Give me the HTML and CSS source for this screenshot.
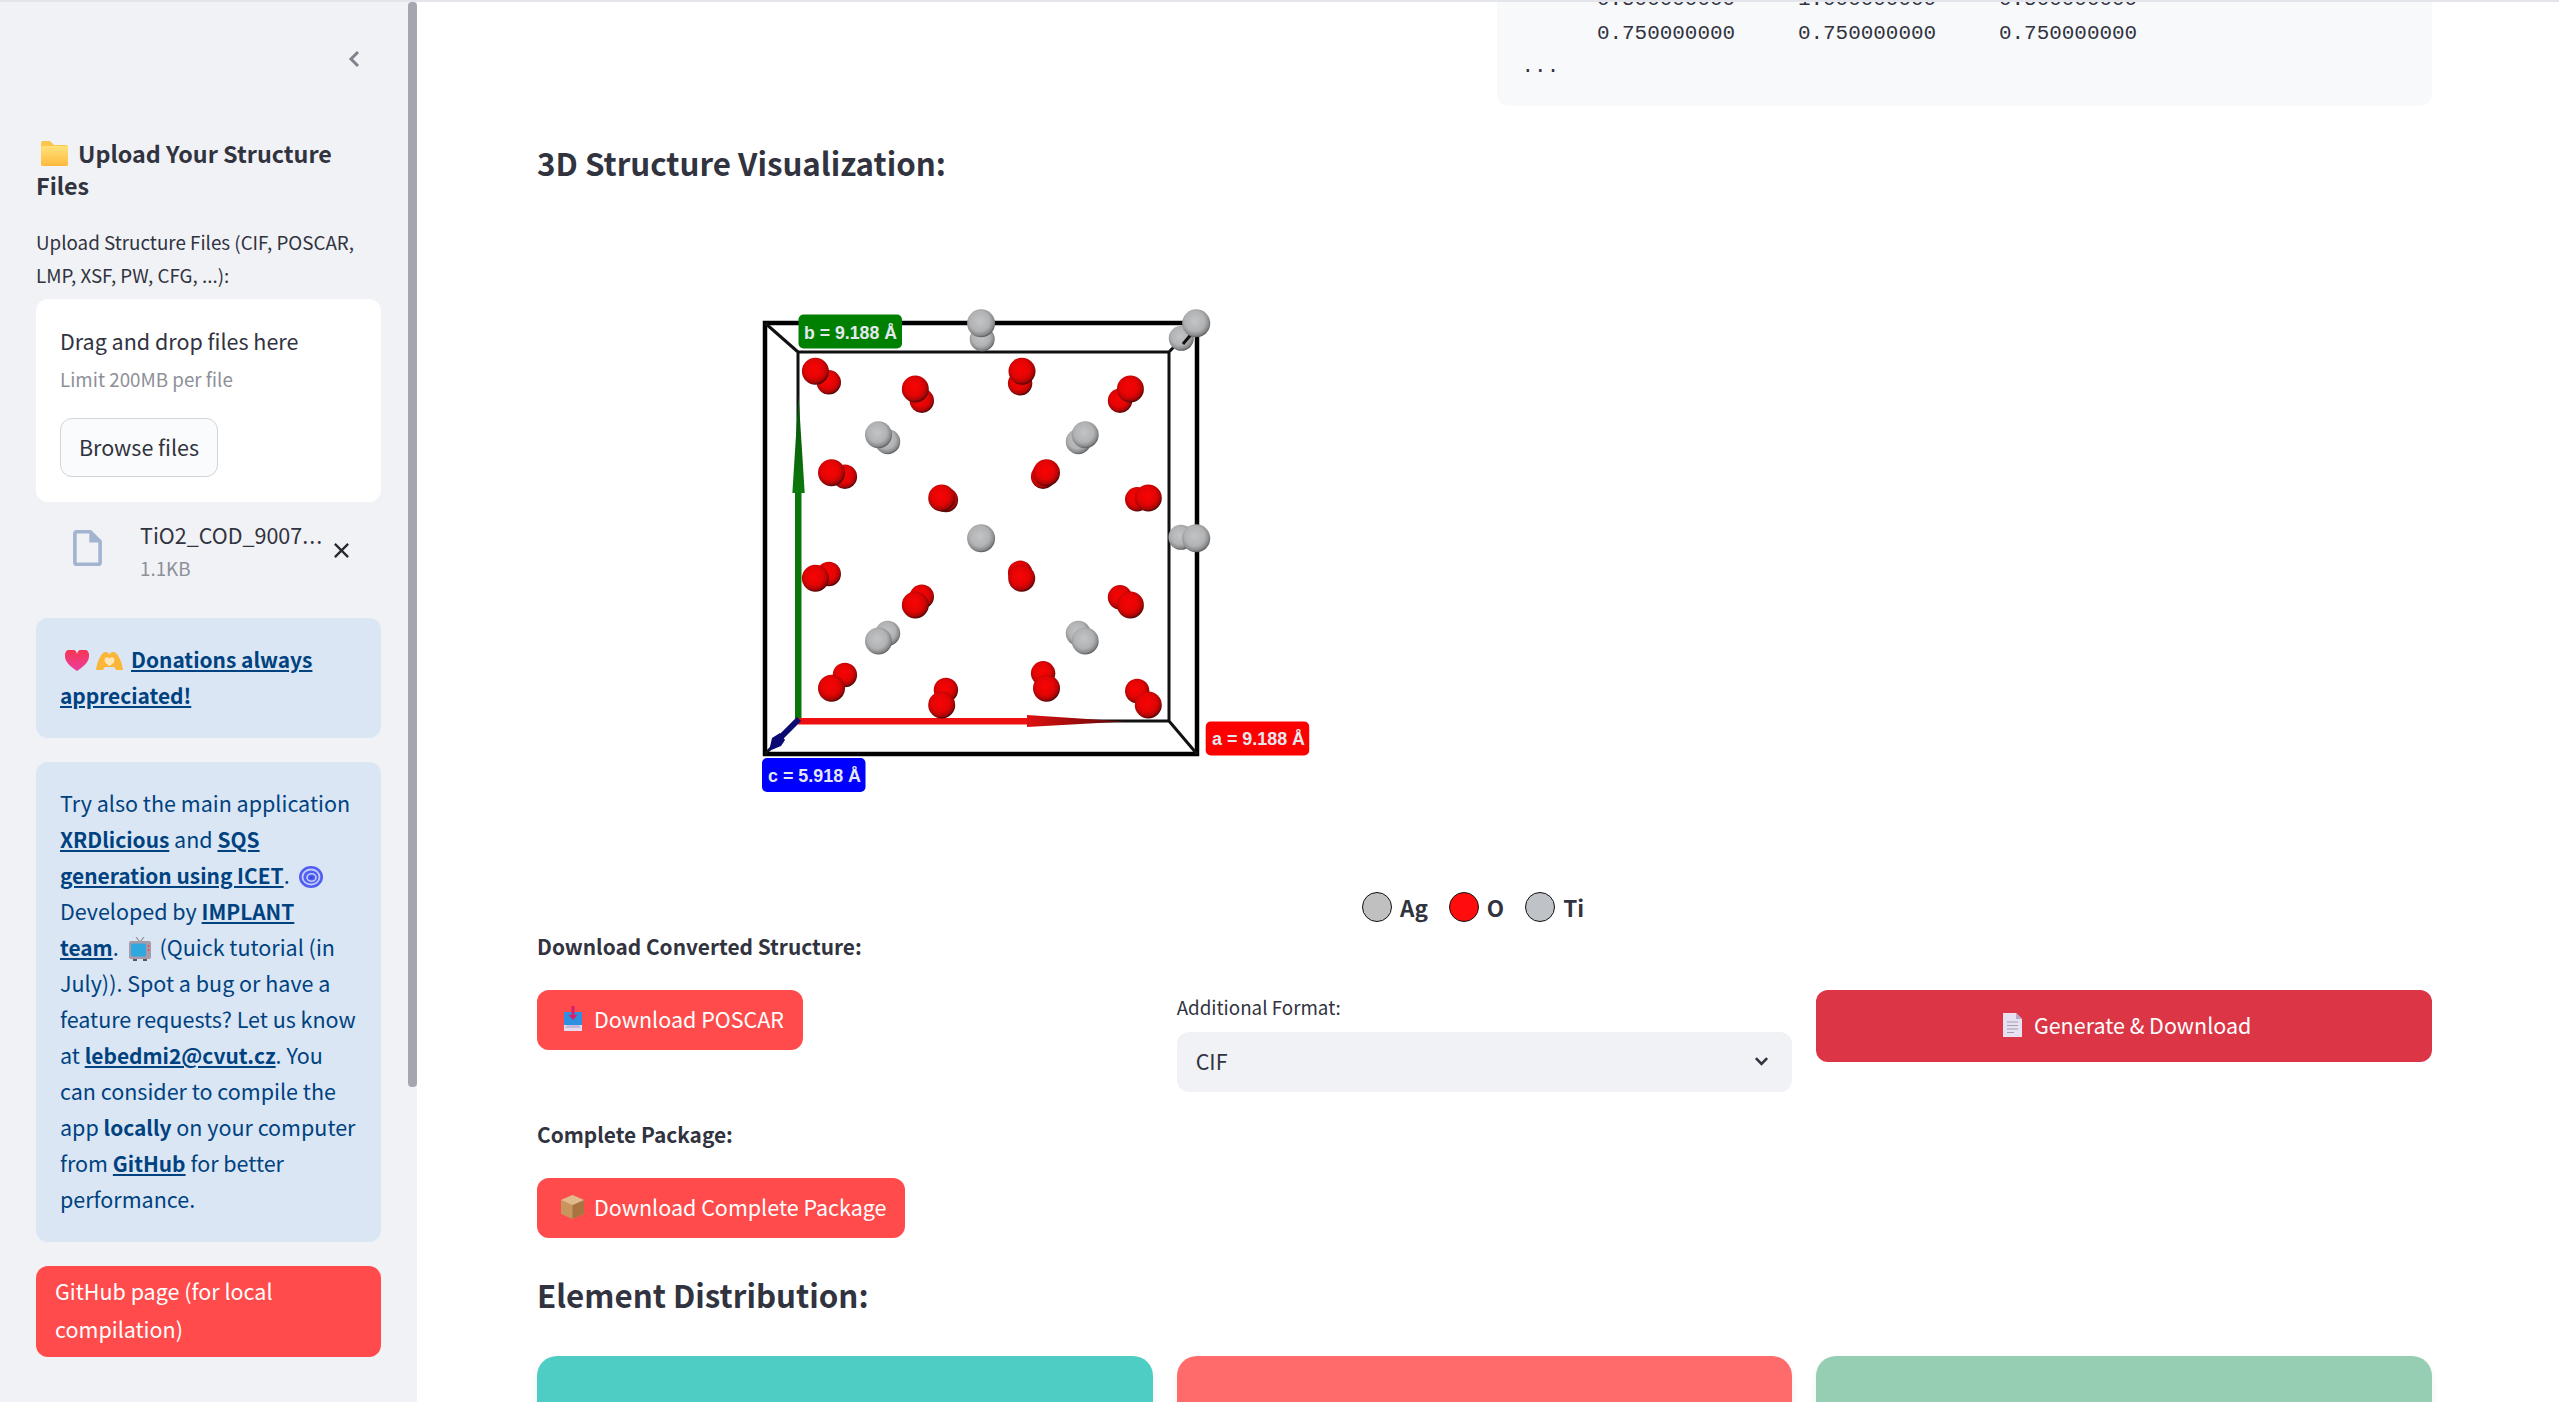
FILE: index.html
```html
<!DOCTYPE html>
<html lang="en">
<head>
<meta charset="utf-8">
<title>Structure converter</title>
<link rel="stylesheet" href="styles.css">
</head>
<body>
<div class="topline"></div>
<div class="app">
  <aside class="sidebar">
    <div class="scrollthumb"></div>
    <div class="collapse">
      <svg class="chevron" viewBox="0 0 14 20"><path d="M11 3 4 10l7 7" fill="none" stroke="#7f828c" stroke-width="3"/></svg>
    </div>
    <h3 class="side-title"><svg class="em-folder" viewBox="0 0 27 25"><defs><linearGradient id="fg" x1="0" y1="0" x2="0" y2="1"><stop offset="0" stop-color="#ffe27a"/><stop offset="1" stop-color="#ffb93c"/></linearGradient></defs><path d="M0 2a2 2 0 0 1 2-2h7l4 4h12a2 2 0 0 1 2 2v17a2 2 0 0 1-2 2H2a2 2 0 0 1-2-2z" fill="#fbc64f"/><path d="M0 7a2 2 0 0 1 2-2h23a2 2 0 0 1 2 2v16a2 2 0 0 1-2 2H2a2 2 0 0 1-2-2z" fill="url(#fg)"/></svg>Upload Your Structure Files</h3>
    <div class="upload-label">Upload Structure Files (CIF, POSCAR, LMP, XSF, PW, CFG, ...):</div>
    <section class="dropzone">
      <div class="dz-title">Drag and drop files here</div>
      <div class="dz-limit">Limit 200MB per file</div>
      <button class="browse">Browse files</button>
    </section>
    <div class="file-row">
      <svg class="file-icon" viewBox="4 2 16 20"><path d="M14 2H6a2 2 0 0 0-2 2v16a2 2 0 0 0 2 2h12a2 2 0 0 0 2-2V8zm4 18H6V4h7v5h5z" fill="#a3b4d1"/></svg>
      <div class="file-text">
        <div class="file-name">TiO2_COD_9007<span class="dots">...</span></div>
        <div class="file-size">1.1KB</div>
      </div>
      <svg class="file-x" viewBox="0 0 18 18"><path d="M2 2l14 14M16 2 2 16" stroke="#262730" stroke-width="2.4" fill="none"/></svg>
    </div>
    <div class="info first-info"><svg class="em-heart" viewBox="0 0 24 21"><defs><linearGradient id="hg" x1="0" y1="0" x2="0" y2="1"><stop offset="0" stop-color="#f8344e"/><stop offset="1" stop-color="#ea3ea0"/></linearGradient></defs><path d="M12 21C5 16 0 12 0 6a6 6 0 0 1 12-2 6 6 0 0 1 12 2c0 6-5 10-12 15z" fill="url(#hg)"/></svg><svg class="em-hands" viewBox="0 0 27 20"><path d="M0 19C1 11 5 2 9 1c2-.5 4 1 4.500 2.500C14 2 16 .5 18 1c4 1 8 10 9 18h-7c-1-2-1-3-3-3h-7c-2 0-2 1-3 3z" fill="#fbb637"/><path d="M13.500 15c-3-2-5-3.500-5-6 0-3 3.500-3.500 5-1.500 1.500-2 5-1.500 5 1.500 0 2.500-2 4-5 6z" fill="#fde6ba"/></svg><a href="#">Donations always appreciated!</a></div>
    <div class="info">Try also the main application <a href="#">XRDlicious</a> and <a href="#">SQS generation using ICET</a>.<svg class="em-spiral" viewBox="0 0 24 22"><ellipse cx="12" cy="11" rx="12" ry="11" fill="#4f5df0"/><ellipse cx="12" cy="11" rx="8.500" ry="7.500" fill="none" stroke="#c3ccff" stroke-width="1.800"/><ellipse cx="12.500" cy="11.500" rx="4.500" ry="3.800" fill="none" stroke="#c3ccff" stroke-width="1.600"/><circle cx="12.500" cy="11.500" r="1.300" fill="#3340c8"/></svg> Developed by <a href="#">IMPLANT team</a>.<svg class="em-tv" viewBox="0 0 22 24"><path d="M7 0l4 5 4-5" fill="none" stroke="#8f8f98" stroke-width="1.200"/><path d="M4 21h4v3H4zM14 21h4v3h-4z" fill="#5b5560"/><rect y="4" width="22" height="18" rx="2" fill="#a79ba8"/><rect x="2" y="6.500" width="15" height="13" rx="1.500" fill="#2fa8e0"/><circle cx="19.500" cy="9" r="1" fill="#e84a6d"/><circle cx="19.500" cy="13" r="1" fill="#e84a6d"/></svg> (Quick tutorial (in July)). Spot a bug or have a feature requests? Let us know at <a href="#">lebedmi2@cvut.cz</a>. You can consider to compile the app <b>locally</b> on your computer from <a href="#">GitHub</a> for better performance.</div>
    <a class="github" href="#">GitHub page (for local compilation)</a>
  </aside>

  <main class="main">
    <div class="top-row">
      <div></div>
      <pre class="code">      0.500000000     1.000000000     0.500000000
      0.750000000     0.750000000     0.750000000
...</pre>
    </div>

    <h3 class="viz-title">3D Structure Visualization:</h3>

    <svg class="viewer" viewBox="740 290 600 520">
      <defs>
        <radialGradient id="red" cx=".45" cy=".42" r=".58"><stop offset="0" stop-color="#f80404"/><stop offset=".58" stop-color="#e40404"/><stop offset=".86" stop-color="#a80606"/><stop offset="1" stop-color="#4a0606"/></radialGradient>
        <radialGradient id="gray" cx=".45" cy=".42" r=".58"><stop offset="0" stop-color="#c2c4c6"/><stop offset=".62" stop-color="#b0b2b4"/><stop offset=".88" stop-color="#888a8c"/><stop offset="1" stop-color="#5c5d60"/></radialGradient>
        <linearGradient id="gArrow" x1="0" y1="0" x2="0" y2="1"><stop offset="0" stop-color="#064f06"/><stop offset="1" stop-color="#0c7a0c"/></linearGradient>
        <linearGradient id="rArrow" x1="0" y1="0" x2="1" y2="0"><stop offset="0" stop-color="#e01010"/><stop offset="1" stop-color="#5a0808"/></linearGradient>
      </defs>
      <g class="frame-outer"><path d="M765 323H1197V754H765Z"/></g>
      <g class="frame-inner"><path d="M798 352H1169V721H798ZM765 323 798 352M1197 323 1169 352M765 754 798 721M1197 754 1169 721"/></g>
      <path d="M792.400 493 798.500 395 804.700 493Z" fill="url(#gArrow)"/>
      <path class="arrow-shaft-green" d="M795 493h6.500v228H795z"/>
      <path class="arrow-shaft-red" d="M798 718h229v6.500H798z"/>
      <path d="M1027 715 1125 721.500 1027 727Z" fill="url(#rArrow)"/>
      <path class="arrow-blue" d="M799 719 780 738"/>
      <path class="arrow-blue-tip" d="M769 751 772 738 780 733 785 740 781 746Z"/>
      <g fill="url(#gray)">
        <circle cx="982.200" cy="339" r="12.500"/><circle cx="981.100" cy="323.300" r="14"/>
        <circle cx="1181.300" cy="338.300" r="12.500"/>
        <circle cx="887.700" cy="441.700" r="12.500"/><circle cx="878.500" cy="434.700" r="13.500"/>
        <circle cx="1078.300" cy="441.700" r="12.500"/><circle cx="1085.200" cy="434.700" r="13.500"/>
        <circle cx="981.100" cy="538.300" r="14"/>
        <circle cx="1180.900" cy="537.300" r="12.500"/>
        <circle cx="887.700" cy="633.300" r="12.500"/><circle cx="878.500" cy="641" r="13.500"/>
        <circle cx="1078.300" cy="633.300" r="12.500"/><circle cx="1085.200" cy="641" r="13.500"/>
      </g>
      <path class="frame-tick" d="M1183 344 1194 331"/>
      <g fill="url(#gray)">
        <circle cx="1196.200" cy="323.300" r="14"/>
        <circle cx="1196.200" cy="538.300" r="14"/>
      </g>
      <g fill="url(#red)">
        <circle cx="828.800" cy="382.300" r="12.200"/><circle cx="815.400" cy="371.300" r="13.500"/>
        <circle cx="921.800" cy="400.700" r="12.200"/><circle cx="915.300" cy="389" r="13.500"/>
        <circle cx="1020.100" cy="383.300" r="12.200"/><circle cx="1022" cy="371.300" r="13.500"/>
        <circle cx="1120" cy="400.700" r="12.200"/><circle cx="1130.400" cy="389" r="13.500"/>
        <circle cx="844.900" cy="476.700" r="12.200"/><circle cx="831.500" cy="472.700" r="13.500"/>
        <circle cx="1043.100" cy="476.700" r="12.200"/><circle cx="1046.500" cy="472.700" r="13.500"/>
        <circle cx="945.900" cy="500" r="12.200"/><circle cx="941.700" cy="498" r="13.500"/>
        <circle cx="1137.200" cy="499.300" r="12.200"/><circle cx="1148.300" cy="498" r="13.500"/>
        <circle cx="828.800" cy="574" r="12.200"/><circle cx="815.400" cy="578.300" r="13.500"/>
        <circle cx="1020.100" cy="572.700" r="12.200"/><circle cx="1021.700" cy="578.300" r="13.500"/>
        <circle cx="921.800" cy="596.700" r="12.200"/><circle cx="915.300" cy="605" r="13.500"/>
        <circle cx="1120" cy="597.300" r="12.200"/><circle cx="1130.400" cy="605" r="13.500"/>
        <circle cx="844.900" cy="675" r="12.200"/><circle cx="831.500" cy="688.300" r="13.500"/>
        <circle cx="945.900" cy="690" r="12.200"/><circle cx="941.700" cy="705" r="13.500"/>
        <circle cx="1043.100" cy="673.300" r="12.200"/><circle cx="1046.500" cy="688.300" r="13.500"/>
        <circle cx="1137.200" cy="691" r="12.200"/><circle cx="1148.300" cy="705" r="13.500"/>
      </g>
      <rect class="lab-green" x="798.500" y="314.500" width="103.500" height="34" rx="5"/>
      <text class="lab-text" x="804" y="339" textLength="93" lengthAdjust="spacingAndGlyphs">b = 9.188 Å</text>
      <rect class="lab-red" x="1205.700" y="721.500" width="103.500" height="34" rx="5"/>
      <text class="lab-text" x="1212" y="745" textLength="93" lengthAdjust="spacingAndGlyphs">a = 9.188 Å</text>
      <rect class="lab-blue" x="762" y="758" width="103.500" height="34" rx="5"/>
      <text class="lab-text" x="768" y="782" textLength="93" lengthAdjust="spacingAndGlyphs">c = 5.918 Å</text>
    </svg>

    <div class="legend">
      <span class="dot dot-ag"></span><span class="leg-text">Ag</span>
      <span class="dot dot-o"></span><span class="leg-text">O</span>
      <span class="dot dot-ti"></span><span class="leg-text">Ti</span>
    </div>

    <div class="sub-label first-sub">Download Converted Structure:</div>
    <div class="dl-grid">
      <div><button class="btn-red btn-poscar"><svg class="em-inbox" viewBox="0 0 20 25"><path d="M1 8h18v17H1z" fill="#e4dcee"/><path d="M1 6h18v13H1z" fill="#2f8fe0"/><path d="M4 19h12l2 3H2z" fill="#c4b9d6"/><path d="M8.500 0h3v9h3L10 14 5.500 9h3z" fill="#d6206c"/></svg>Download POSCAR</button></div>
      <div>
        <div class="field-label">Additional Format:</div>
        <div class="select"><span>CIF</span><svg class="sel-chev" viewBox="0 0 16 10"><path d="M2 2l6 6 6-6" fill="none" stroke="#31333f" stroke-width="2.800"/></svg></div>
      </div>
      <div><button class="btn-generate"><svg class="em-page" viewBox="0 0 19 24"><path d="M0 0h13l6 6v18H0z" fill="#e7e2f2"/><path d="M13 0l6 6h-6z" fill="#b9abc9"/><path d="M4 9h11M4 12.500h11M4 16h11M4 19.500h7" stroke="#a89cb3" stroke-width="1.200"/></svg>Generate &amp; Download</button></div>
    </div>

    <div class="sub-label package-label">Complete Package:</div>
    <button class="btn-red btn-package"><svg class="em-box" viewBox="0 0 23 24"><path d="M11.500 0 23 5v14l-11.500 5L0 19V5z" fill="#c8955f"/><path d="M11.500 10 23 5v14l-11.500 5z" fill="#a87440"/><path d="M11.500 0 23 5l-11.500 5L0 5z" fill="#e2b98a"/></svg>Download Complete Package</button>

    <h2 class="dist-title">Element Distribution:</h2>
    <div class="cards">
      <div class="card card-teal"></div>
      <div class="card card-coral"></div>
      <div class="card card-green"></div>
    </div>
  </main>
</div>
</body>
</html>
```

FILE: styles.css
```css
* { box-sizing: border-box; }
html, body { margin: 0; height: 100%; overflow: hidden; background: #fff; }
body {
  font-family: "Noto Sans CJK JP", "Noto Sans", sans-serif;
  color: #31333f;
  font-size: 21.5px;
}
.topline { position: absolute; left: 0; top: 0; right: 0; height: 2px; background: #e4e5ea; z-index: 5; }
.app { display: flex; height: 1402px; overflow: hidden; }

/* Sidebar */
.sidebar {
  position: relative;
  flex: 0 0 417px;
  background: #f0f2f6;
  padding: 47px 36px 0;
}
.scrollthumb { position: absolute; left: 408px; top: 2px; width: 9px; height: 1085px; background: #a6a6b0; border-radius: 4px; }
.collapse { height: 24px; display: flex; justify-content: flex-end; padding-right: 20px; align-items: center; }
.chevron { width: 14px; height: 20px; }
.side-title { margin: 66px 0 0; font-size: 23.3px; line-height: 32px; font-weight: 600; }
.em-folder { width: 27px; height: 25px; margin: 0 10px 0 5px; vertical-align: -3px; }
.upload-label { margin-top: 24px; padding-bottom: 1px; font-size: 18.8px; line-height: 33px; }
.dropzone { margin-top: 7px; height: 203px; background: #fff; border-radius: 12px; padding: 26px 24px 0; }
.dz-title { line-height: 32px; }
.dz-limit { margin-top: 8px; font-size: 18.8px; line-height: 28px; color: #8e9099; }
.browse {
  display: block; margin-top: 25px; width: 158px; height: 59px;
  background: #fafbfc; border: 1px solid #d3d4d9; border-radius: 12px;
  font: inherit; font-size: 21.5px; color: #31333f; padding: 0 0 3px;
}
.file-row { display: flex; margin-top: 17px; padding-left: 37px; position: relative; }
.file-icon { flex: none; width: 29px; height: 36px; margin: 11px 38px 0 0; }
.file-text { width: 183px; }
.file-name { line-height: 32px; white-space: nowrap; }
.dots { letter-spacing: 1px; }
.file-size { margin-top: 3px; padding-bottom: 1px; font-size: 18.8px; line-height: 28px; color: #8e9099; }
.file-x { flex: none; width: 17px; height: 17px; margin: 23px 0 0 10px; }
.info {
  margin-top: 24px; padding: 23px 24px 25px; background: #dae6f4; border-radius: 12px;
  color: #004280; line-height: 36px;
}
.first-info { margin-top: 35px; }
.info a, .info b { color: #004280; font-weight: 700; font-size: 20.9px; }
.em-heart { width: 24px; height: 21px; margin: 0 7px 0 5px; vertical-align: -3px; }
.em-hands { width: 27px; height: 20px; margin-right: 8px; vertical-align: -3px; }
.em-spiral { width: 24px; height: 22px; margin-left: 9px; vertical-align: -4px; }
.em-tv { width: 22px; height: 24px; margin: 0 4px 0 10px; vertical-align: -5px; }
.github {
  display: block; margin-top: 24px; padding: 6px 19px 9px; background: #ff4b4b; border-radius: 12px;
  color: #fff; line-height: 38px; text-decoration: none;
}

/* Main */
.main { flex: 1; min-width: 0; padding: 0 127px 0 120px; }
.top-row { display: grid; grid-template-columns: 1fr 1fr; gap: 24px; height: 106px; overflow: hidden; }
.code {
  margin: -37px 0 0; padding: 20px 25px 20px; height: 143px; min-width: 0;
  background: #f8f9fb; border-radius: 12px;
  font-family: "Liberation Mono", monospace; font-size: 20.95px; line-height: 33.5px; color: #31333f;
}
.viz-title { margin: 35px 0 0; font-size: 31.3px; line-height: 44px; font-weight: 600; }
.viewer { display: block; width: 600px; height: 520px; margin: 105px 0 0 203px; }
.frame-outer path { fill: none; stroke: #000; stroke-width: 4.500; }
.frame-inner path { fill: none; stroke: #111; stroke-width: 3; }
.frame-tick { fill: none; stroke: #111; stroke-width: 3; }
.arrow-shaft-green { fill: #0a760a; }
.arrow-shaft-red { fill: #ee1010; }
.arrow-blue { stroke: #0a0a72; stroke-width: 6; fill: none; }
.arrow-blue-tip { fill: #0a0a72; }
.lab-green { fill: #008000; }
.lab-red { fill: #ff0000; }
.lab-blue { fill: #0000ff; }
.lab-text { font-family: "Liberation Sans", sans-serif; font-weight: 700; font-size: 19.2px; fill: #e4e8ee; }
.legend { display: flex; align-items: center; margin: 81px 0 0; padding-left: 825px; height: 32px; }
.dot { width: 30px; height: 30px; border-radius: 50%; border: 1.500px solid #111; flex: none; }
.dot-ag { background: #c0c0c0; }
.dot-o { background: #ff0d0d; }
.dot-ti { background: #bfc2c7; }
.leg-text { margin: 0 21px 0 8px; font-size: 22.5px; font-weight: 700; line-height: 32px; }
.sub-label { font-size: 20.85px; line-height: 32px; font-weight: 600; }
.first-sub { margin-top: 7px; padding-bottom: 1px; }
.dl-grid { display: grid; grid-template-columns: repeat(3, 1fr); gap: 24px; margin-top: 27px; align-items: start; }
.btn-red, .btn-generate {
  display: inline-flex; align-items: center; border: 0; padding: 0 0 3px; color: #fff;
  font: inherit; font-size: 21.5px; border-radius: 12px;
}
.btn-red { height: 60px; background: #ff4b4b; }
.btn-poscar { width: 266px; padding-left: 26px; }
.btn-package { width: 368px; padding-left: 24px; margin-top: 27px; }
.btn-generate { display: flex; justify-content: center; width: 100%; height: 72px; background: #dc3545; padding-left: 6px; }
.em-inbox { width: 20px; height: 25px; margin-right: 11px; }
.em-box { width: 23px; height: 24px; margin-right: 10px; }
.em-page { width: 19px; height: 24px; margin-right: 12px; }
.field-label { margin: 3px 0 0; font-size: 18.8px; line-height: 28px; }
.select {
  display: flex; align-items: center; justify-content: space-between; margin-top: 11px; height: 60px;
  background: #f0f2f6; border-radius: 12px; padding: 0 23px 3px 19px;
}
.sel-chev { width: 15px; height: 10px; }
.package-label { margin-top: 26px; padding-bottom: 1px; }
.dist-title { margin: 34px 0 0; font-size: 31.3px; line-height: 46px; font-weight: 600; }
.cards { display: grid; grid-template-columns: repeat(3, 1fr); gap: 24px; margin-top: 38px; }
.card { height: 120px; border-radius: 20px; box-shadow: 0 4px 8px rgba(0,0,0,.06); }
.card-teal { background: #4ecdc4; }
.card-coral { background: #ff6b6b; }
.card-green { background: #96ceb4; }
```
